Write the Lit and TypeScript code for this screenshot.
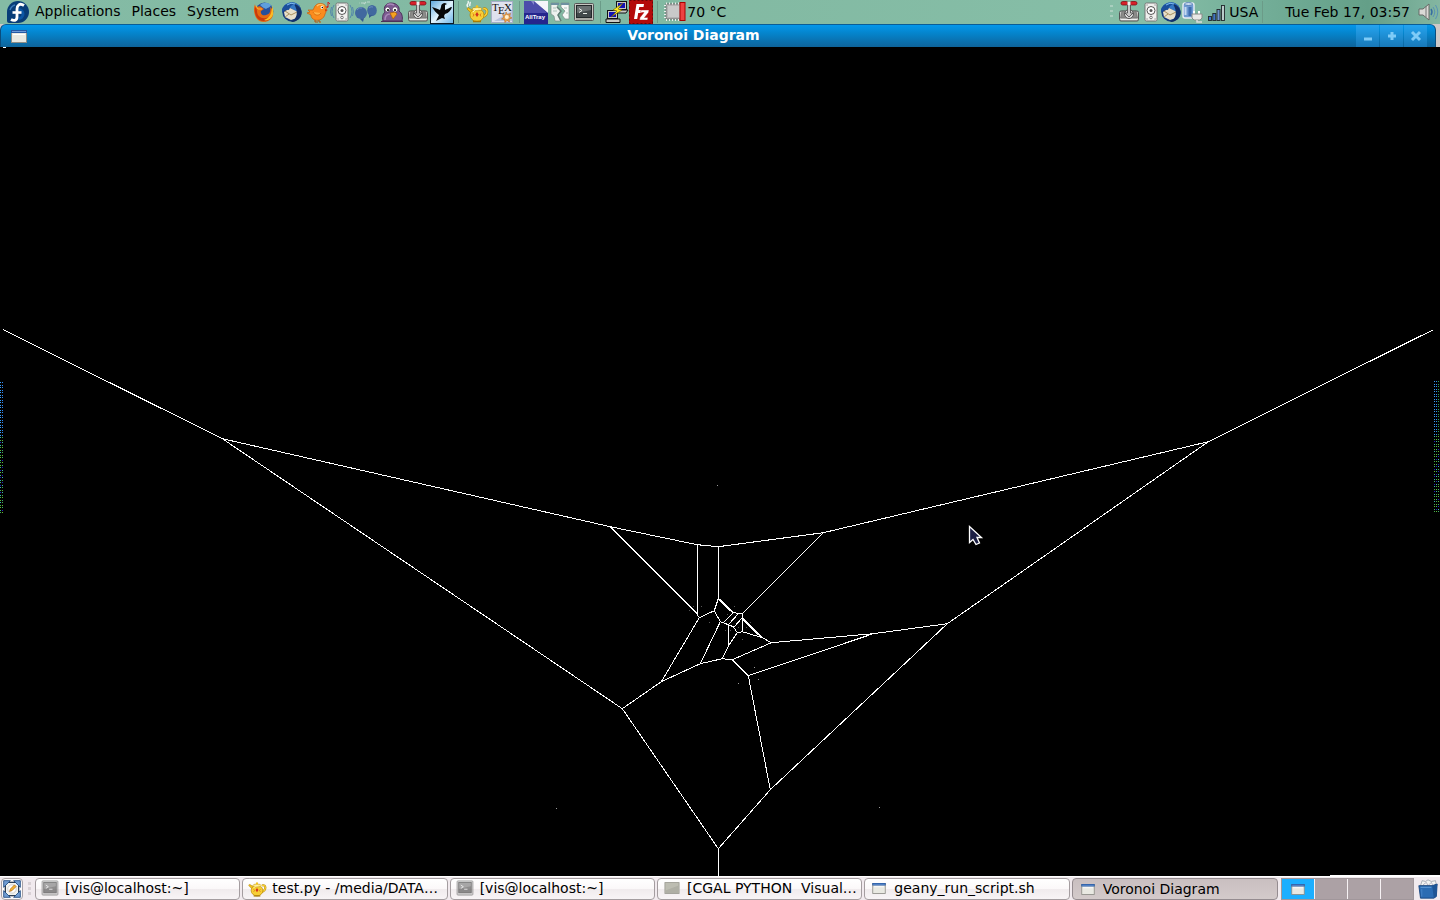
import { LitElement, html, svg, css, type SVGTemplateResult } from 'lit';
import { customElement, property } from 'lit/decorators.js';

const press = svg`
  <rect x="2.500" y="11" width="19" height="10" rx="1.500" fill="#c9c9c7" stroke="#555"/>
  <path d="M5 11h14l1.500 7h-17z" fill="#8b8b89" stroke="#666" stroke-width=".6"/>
  <circle cx="12" cy="14" r="4.500" fill="#ddd" stroke="#555"/>
  <path d="M10.500 4h3v9h2.500l-4 4-4-4h2.500z" fill="#c9c9c9" stroke="#444" stroke-width=".8"/>
  <path d="M4 19.500h16" stroke="#eee"/>
  <rect x="4" y="1.500" width="7" height="3.500" rx="1.700" fill="#d8202a" stroke="#7f1016" stroke-width=".8"/>
  <rect x="13" y="1.500" width="7" height="3.500" rx="1.700" fill="#d8202a" stroke="#7f1016" stroke-width=".8"/>
  <rect x="10.500" y="2" width="3" height="3" fill="#eee"/>`;

const speaker = svg`
  <rect x="6" y="3" width="12" height="18" rx="1.500" fill="#f0f0ee" stroke="#777"/>
  <circle cx="12" cy="10.500" r="4" fill="#fff" stroke="#555"/>
  <circle cx="12" cy="10.500" r="1.500" fill="#555"/>
  <circle cx="12" cy="17.500" r="1.300" fill="#fff" stroke="#555" stroke-width=".8"/>
  <path d="M8 5h.1M16 5h.1M8 19h.1M16 19h.1" stroke="#555" stroke-linecap="round"/>`;

const teapot = svg`
  <path d="M18 9c5-2 6 6-1 8" fill="none" stroke="#b98a08" stroke-width="2.600"/>
  <path d="M18 9c5-2 6 6-1 8" fill="none" stroke="#ffd93b" stroke-width="1.300"/>
  <path d="M6 13l-4-4 1-1.500 5 3z" fill="#f3c31a" stroke="#a97c05" stroke-width=".6"/>
  <ellipse cx="12" cy="15" rx="7" ry="6.500" fill="#f7cf35" stroke="#b68508" stroke-width=".8"/>
  <path d="M8 21.500h8" stroke="#a97c05" stroke-width="1.500"/>
  <ellipse cx="12" cy="9" rx="5" ry="1.800" fill="#ffeb84" stroke="#b68508" stroke-width=".6"/>
  <circle cx="12" cy="6.500" r="1.300" fill="#f3c31a"/>
  <path d="M12 12l1.700 2.500-1.700 2.500-1.700-2.500z" fill="#d2321c"/>
  <path d="M8 13.500l1 1.500-1 1.500M16 13.500l-1 1.500 1 1.500" stroke="#e0761a" fill="none"/>
  <path d="M8 12q1.500-3 5-3" stroke="#fff6c2" fill="none"/>
  <path d="M3 7c-3-3 2-3 0-6M5 6c-1-2 1-3 0-4" stroke="#fff" stroke-width="1.500" fill="none" opacity=".85"/>`;

const thunder = svg`
  <circle cx="12" cy="12" r="9.700" fill="#15397c"/>
  <path d="M4 6C8 1 17 1 20 7c2 4 2 9-2 13 1-6-3-12-14-14z" fill="#3478c4"/>
  <path d="M4 12l6-4 8 4-1 6-6 2-6-3z" fill="#e8dfca"/>
  <path d="M5 11l6 4 6-3M5 17l4-3" stroke="#a8905f" fill="none"/>
  <path d="M2 9c2-5 8-7 13-5-4 1-5 3-6 6-3-1-5 0-7 3z" fill="#1b4f9c"/>
  <path d="M14 4c6 1 9 7 7 12-2 4-6 6-10 6 6-3 8-10 3-18z" fill="#122f68"/>
  <path d="M7 5q4-3 8-1" stroke="#7db9ee" fill="none"/>`;

const terminal = svg`
  <rect x="2.500" y="3.500" width="19" height="17" rx="1" fill="#c6c6c0" stroke="#555"/>
  <rect x="4.500" y="5.500" width="15" height="12" fill="#42484a" stroke="#23282a"/>
  <path d="M5 6h14v4L5 13z" fill="#6a7071"/>
  <path d="M7 8.500l3 2-3 2M11 13.500h4" stroke="#e9eee9" fill="none"/>
  <path d="M4 19h16" stroke="#8c8c88"/>`;

const windowIcon = svg`
  <rect x="4.500" y="6.500" width="15" height="12" fill="#e9e9e2" stroke="#8d8d86"/>
  <rect x="4" y="6" width="16" height="3" fill="#2559a5"/>
  <path d="M5 7.500h14" stroke="#6f9bd6"/>
  <path d="M6 10.500h12" stroke="#fff"/>`;

const icons: Record<string, SVGTemplateResult> = {
  fedora: svg`
    <path d="M12 1a11 11 0 1 1 0 22H3a2 2 0 0 1-2-2v-9A11 11 0 0 1 12 1z" fill="#073d78"/>
    <path d="M12.500 9.500a4.500 4.500 0 0 1 0 9" fill="none" stroke="#0b57a4" stroke-width="3"/>
    <path d="M18 5.500c-4.500-3-7 0-7 3.500v8c0 4-3.500 4-6 2.500" fill="none" stroke="#fff" stroke-width="2.800"/>
    <path d="M6.500 12.500h9" stroke="#fff" stroke-width="2.600"/>
    <path d="M4 10c1-3 3-4.500 5-5" stroke="#3a78b8" fill="none" stroke-width="1.500"/>`,
  firefox: svg`
    <circle cx="12.500" cy="11.500" r="9" fill="#264f9b"/>
    <path d="M8 5c3-3 8-3 11 0-1 3-3 2-5 4-2-1-4-2-6-4z" fill="#5f9fdc"/>
    <path d="M3 4c0 2 1 2 2 3 2-1 3-1 4 0l3 2-3 2c-1 3 2 5 5 4 4-1 5-4 4-8 4 3 4 9 1 12-4 4-11 4-14 0C2 15 1 9 3 4z" fill="#e66a12"/>
    <path d="M3 7c1 1 2 2 2 4 0 5 4 8 9 7 4 0 6-3 7-6 0 5-4 10-9 9-8 0-10-8-9-14z" fill="#c93b0c"/>
    <path d="M20 6c2 4 2 9-1 12-2 2-5 3-7 2 6-2 8-7 8-14z" fill="#fbbd25"/>
    <path d="M4 6l2 3 4 0" stroke="#ffb431" fill="none"/>`,
  thunder,
  bird: svg`
    <path d="M9 6c3-4 10-3 11 1 1 3 0 5-1 7-1 5-6 7-10 6-3-1-4-3-4-5L1 13l3-1-2-2 5 0c1-1 1-3 2-4z" fill="#fb8c1e" stroke="#c95d08" stroke-width=".7"/>
    <path d="M7 12c2 4 6 4 8 1" fill="#ffb347" stroke="#d56b0a" stroke-width=".8"/>
    <path d="M11 6c2-2 5-2 7 0" stroke="#ffc368" stroke-width="1.500" fill="none"/>
    <circle cx="16" cy="7.500" r="1.400" fill="#fff"/><circle cx="16.300" cy="7.500" r=".7"/>
    <path d="M19 9l3 1-3 1.500z" fill="#d33d13"/><path d="M9 20v2h3M13 20v2h2" stroke="#b95407" fill="none"/>
    <path d="M22 7V2l2 2" stroke="#c22" fill="none"/><circle cx="21.300" cy="7" r="1" fill="#c22"/>`,
  sound: svg`${speaker}
    <path d="M4 5q-4 7 0 13M1.500 7q-2 5 0 9M20 5q4 7 0 13M22.500 7q2 5 0 9" stroke="#5487ab" fill="none"/>`,
  balls: svg`
    <ellipse cx="7" cy="13" rx="6" ry="6" fill="#41689f"/><path d="M6 19l3 3 1-4z" fill="#365a90"/>
    <ellipse cx="18" cy="10.500" rx="4.800" ry="5.500" fill="#41689f"/><path d="M15 15v3l4-3z" fill="#365a90"/>
    <path d="M3 10q2-3 5-2M15 8q2-2 4-1" stroke="#6a8dbe" fill="none"/>
    <path d="M7 3h3M13 2h3M10 4l2-2M5 3h.5" stroke="#d5e5df" stroke-width="1.200" opacity=".7"/>`,
  pidgin: svg`
    <path d="M3 21c-1-5 0-7 2-9-2-5 1-9 6-9 6 0 9 4 8 8 3 2 4 6 3 10z" fill="#7d5a91" stroke="#4b3159"/>
    <path d="M5 20c0-4 2-6 5-6M7 5q3-2 7 0" stroke="#a98abb" fill="none" stroke-width="1.500"/>
    <circle cx="7.500" cy="9.500" r="2.500" fill="#fff" stroke="#4b3159" stroke-width=".7"/>
    <circle cx="15" cy="9.500" r="2.700" fill="#fff" stroke="#4b3159" stroke-width=".7"/>
    <circle cx="8" cy="10" r="1.100"/><circle cx="15" cy="10" r="1.100"/>
    <path d="M10 13l5-1 2 2-4 5z" fill="#f6a122" stroke="#af5e06" stroke-width=".7"/>
    <path d="M1 21.500h22" stroke="#4b3159"/>`,
  press,
  swallow: svg`
    <defs><linearGradient id="sky" x2="1" y2="1"><stop stop-color="#5aa5dd"/><stop offset=".5" stop-color="#e2f3fc"/><stop offset="1" stop-color="#6cb5e8"/></linearGradient></defs>
    <rect x=".5" y=".5" width="23" height="23" fill="url(#sky)" stroke="#0c1a24"/>
    <path d="M2 7c3 1 6 2 8 3l1-3c0-3 2-4 4-4l2 1-2 1 0 5c3-1 5-3 7-3-1 3-3 6-7 7l-1 2 1 3-3-1-6 3 3-6c-3-2-5-5-7-8z" fill="#080808"/>`,
  teapot,
  tex: svg`
    <rect x=".5" y="1.500" width="21" height="21" fill="#dfe2ee" stroke="#a5aec7"/>
    <path d="M3 21h18V11z" fill="#b9c3df"/>
    <text x="1" y="11" font-family="Liberation Serif, serif" font-size="11" fill="#111">T</text>
    <text x="7" y="14" font-family="Liberation Serif, serif" font-size="11" fill="#111">E</text>
    <text x="13" y="11" font-family="Liberation Serif, serif" font-size="11" fill="#111">X</text>
    <path d="M15 12l1.500 2.500 3-1-1 3 2.500 1.500-3 1 .500 3-2.500-1.500-2 2-.5-3-3-.5 2.500-2-1.500-2.500 3 .5z" fill="#e9a04c" stroke="#b86d24" stroke-width=".6"/>
    <circle cx="15.800" cy="17" r="2" fill="#fff0d0"/>`,
  alltray: svg`
    <rect width="24" height="23" y="1" fill="#25258d"/>
    <path d="M0 1h11l12 12H0z" fill="#4c4cab"/><path d="M10 1h14v12z" fill="#f5f5fb"/><path d="M10 1v4l-3-4z" fill="#8888cb"/>
    <text x="1" y="19" font-family="Liberation Sans, sans-serif" font-size="6" font-weight="bold" fill="#fff">AllTray</text>`,
  crack: svg`
    <path d="M3 3h8l-2 4 4 4-3 4 3 6H7l-1-5-3-2z" fill="#edf1ee" stroke="#7b8c86" stroke-width=".7"/>
    <path d="M13 3h8v16h-4l-3-4 3-4-4-4z" fill="#f6f8f7" stroke="#7b8c86" stroke-width=".7"/>
    <path d="M3 4h8M13 4h8" stroke="#6e91a0" stroke-width="2"/>
    <path d="M9 7l4 4-3 4 3 6" stroke="#5f7d74" stroke-width="1.500" fill="none"/>
    <path d="M5 8h3M5 11h4M16 8h3M18 13h2" stroke="#afc2bb"/>`,
  terminal,
  putty: svg`
    <rect x="11.500" y="1.500" width="10" height="8" fill="#c9c9c3" stroke="#111"/><rect x="13" y="3" width="7" height="5" fill="#1212b5"/>
    <path d="M10 10h13l-2 3H10z" fill="#c9c9c3" stroke="#111"/>
    <rect x="2.500" y="10.500" width="10" height="8" fill="#c9c9c3" stroke="#111"/><rect x="4" y="12" width="7" height="5" fill="#1212b5"/>
    <path d="M1 19h14v3.500H1z" fill="#c9c9c3" stroke="#111"/>
    <path d="M18 3l-10 7 4 1-6 6 11-7-4-1z" fill="#ffec20" stroke="#695a00" stroke-width=".6"/>`,
  filezilla: svg`
    <rect y="0" width="24" height="24" fill="#b40a0a"/>
    <rect x=".5" y=".5" width="23" height="23" fill="none" stroke="#6b0606" stroke-dasharray="2 2"/>
    <path d="M5 19L7.500 4H15l-.5 3h-4.200l-.6 3H13l-.5 3H9.200l-1 6z" fill="#fff"/>
    <path d="M12 10h8l-.5 2.500-4 5h3.500l-.5 2.500h-8l.5-2.500 4-5h-3.500z" fill="#fff" stroke="#b40a0a" stroke-width=".4"/>`,
  chip: svg`
    <rect x="3" y="4" width="15" height="15" fill="#b4b4b4" stroke="#737373"/>
    <rect x="5" y="6" width="11" height="11" fill="#c9c9c9"/>
    <path d="M3 3.500h15M3 20h15" stroke="#eee" stroke-dasharray="1 2" stroke-width="2"/>
    <path d="M2 5v14" stroke="#eee" stroke-dasharray="1 2" stroke-width="2"/>
    <rect x="17" y="2.500" width="5" height="18" fill="#ed4242" stroke="#a00"/>`,
  speaker,
  battery: svg`
    <rect x="2" y="3" width="11" height="15" rx="2" fill="#6f9ad2" stroke="#e9eef5" stroke-width="1.400"/>
    <ellipse cx="7.500" cy="4" rx="4" ry="1.500" fill="#c9daef" stroke="#3a69a8" stroke-width=".7"/>
    <path d="M4.500 7v8" stroke="#c6daf2" stroke-width="2"/><path d="M9 7v9" stroke="#3d6cae" stroke-width="3"/>
    <path d="M13 14v-3M18 14v-3" stroke="#fff" stroke-width="2"/>
    <path d="M11 14h10v4l-2 2h-6l-2-2z" fill="#e9e9e7" stroke="#8a8a88"/><path d="M16 20v2h5" stroke="#ddd" fill="none" stroke-width="1.500"/>`,
  signal: svg`
    <g stroke="#20262b" stroke-width=".9"><rect x="3.500" y="16.500" width="3" height="4" fill="#3f74c4"/><rect x="7.800" y="13.500" width="3" height="7" fill="#3f74c4"/><rect x="12" y="9.500" width="3" height="11" fill="#6c93cf"/><rect x="16.500" y="5.500" width="3" height="15" fill="#b8cbc9"/></g>`,
  volume: svg`
    <path d="M3 9h4l6-5v16l-6-5H3z" fill="#dadad6" stroke="#666a66"/><path d="M10 6v11" stroke="#777"/>
    <path d="M15 9q2 3 0 6" stroke="#356ca2" fill="none" stroke-width="1.400"/>
    <path d="M17 7q3.500 5 0 10M19.500 5q4.500 7 0 14" stroke="#5992b5" fill="none"/>`,
  window: windowIcon,
  blank: svg`<rect x="3.500" y="5.500" width="17" height="13" fill="#bdbdb2" stroke="#9a9a91"/><path d="M4 15l16-6v9H4z" fill="#afafa5"/>`,
  desktop: svg`
    <rect x="4" y="4" width="16" height="16" fill="#f3f3ef" stroke="#26374c" stroke-width="1.500"/>
    <g fill="#6f9bd1" stroke="#1e4a82"><path d="M2 2h8L2 10z"/><path d="M22 2v8l-8-8z"/><path d="M2 22v-8l8 8z"/><path d="M22 22h-8l8-8z"/></g>
    <circle cx="12" cy="12" r="5" fill="#fff" stroke="#aaa" stroke-width=".6"/>
    <path d="M9 15l1-3 5-5 2 2-5 5z" fill="#f2b233" stroke="#a55b10" stroke-width=".7"/>`,
  trash: svg`
    <path d="M3 8l2-6 4 1 3-2 4 2 5-1 1 6z" fill="#f4f4f2" stroke="#8b96a0" stroke-width=".8"/>
    <path d="M6 7l4-3 2 4 4-4 2 4" stroke="#aab" fill="none"/>
    <path d="M1 8h16l6-2-1 15-3 2H3z" fill="#2b6cb3" stroke="#123f78"/>
    <path d="M17 8l6-2-1 15-3 2z" fill="#1d5596"/><path d="M3 10h13" stroke="#6ba3dd"/><path d="M4.500 12v9" stroke="#4a89cc"/>`,
};

@customElement('panel-icon')
class PanelIcon extends LitElement {
  @property() name = '';
  @property({ type: Boolean }) faded = false;
  static styles = css`
    :host { display: block; flex: none; width: 24px; height: 24px; }
    svg { display: block; width: 100%; height: 100%; overflow: visible; }
    :host([faded]) { filter: grayscale(1); opacity: 0.6; }
  `;
  render() {
    return html`<svg viewBox="0 0 24 24" aria-hidden="true">${icons[this.name]}</svg>`;
  }
}

const edges = [
  '3,330 222,439 610,527 697,545 718,547 823,533 1208,442 1433,330',
  '222,439 622,709 718,849 718,876',
  '718,849 770,790 947,624 1208,442',
  '622,709 661,682 700,664 722,659 732,660 748,676 770,790',
  '748,676 873,634 947,624',
  '732,660 771,643 873,634',
  '771,643 762,638 742,632 737,633 729,645 722,659',
  '697,545 697,615 699,618 661,682',
  '610,527 698,615',
  '699,618 714,611 718,599 718,547',
  '714,611 720,622 700,664',
  '720,622 728,625 733,627 737,633',
  '728,625 728,646',
  '718,599 733,613 742,614 823,533',
  '742,614 742,632',
  '733,613 723,623',
  '738,614 729,624',
  '742,618 734,627',
];
const heavyEdges = ['719,600 733,613', '742,619 762,638'];
const sites = [
  [717, 485], [556, 808], [879, 807], [754, 667], [758, 679], [738, 683],
  [693, 606], [701, 606], [689, 610], [709, 622], [734, 606], [727, 614],
  [725, 630], [730, 630], [738, 627], [746, 627], [750, 622], [742, 639],
];

const noiseColor = (i: number, c: number) => {
  const blue = ['#3a9cf4', '#2a12d8', '#2b9d50', '#2f8af6'];
  const green = ['#3fb070', '#38b0b0', '#62bc30', '#2a20c8', '#45b050'];
  const k = i * 7 + c * 3 + (i % 4);
  return i < 22 ? blue[k % 4] : green[k % 5];
};
const leftNoise = Array.from({ length: 53 }, (_, i) => [0, 2].map((x, c) =>
  svg`<rect x=${x} y=${382 + Math.floor(i / 2) * 5 + (i % 2) * 3} width="1" height="1" fill=${noiseColor(i, c)}/>`));
const rightNoise = Array.from({ length: 53 }, (_, i) => [1434, 1436, 1438].map((x, c) =>
  svg`<rect x=${x} y=${381 + Math.floor(i / 2) * 5 + (i % 2) * 3} width="1" height="1" fill=${noiseColor(i, c)}/>`));

const launchers: [string, string, string][][] = [
  [['firefox', 'Firefox', 'wide'], ['thunder', 'Thunderbird', 'wide'], ['bird', 'Music', ''], ['sound', 'Sound', ''],
   ['balls', 'Chat', ''], ['pidgin', 'Pidgin', 'wide'], ['press', 'Press', ''], ['swallow', 'Swallow', '']],
  [['teapot', 'Geany', 'wide'], ['tex', 'TeX', '']],
  [['alltray', 'AllTray', ''], ['crack', 'Break', ''], ['terminal', 'Terminal', '']],
  [['putty', 'PuTTY', ''], ['filezilla', 'FileZilla', '']],
];

const trayItems: [string, string, string][] = [
  ['press', 'Press', 'wide'], ['speaker', 'Player', ''], ['thunder', 'Mail', ''],
  ['battery', 'Battery', 'wide'], ['signal', 'Network', 'wide'],
];

const tasks = [
  { icon: 'terminal', label: '[vis@localhost:~]', faded: true },
  { icon: 'teapot', label: 'test.py - /media/DATA…' },
  { icon: 'terminal', label: '[vis@localhost:~]', faded: true },
  { icon: 'blank', label: '[CGAL PYTHON  Visual…' },
  { icon: 'window', label: 'geany_run_script.sh' },
  { icon: 'window', label: 'Voronoi Diagram', active: true },
];

@customElement('app-root')
class AppRoot extends LitElement {
  static styles = css`
    :host {
      display: flex; flex-direction: column; height: 100vh; overflow: hidden;
      background: #000; color: #000;
      font: 14px/20px "DejaVu Sans", sans-serif;
    }
    button { font: inherit; color: inherit; border: 0; padding: 0; margin: 0; background: none; }
    .top {
      display: flex; align-items: center; justify-content: space-between; height: 24px; flex: none;
      background: linear-gradient(90deg, #84bba5 0%, #82b9a2 45%, #86bea7 80%, #72ad97 88%, #649f88 95%, #84b6a1 100%);
    }
    .group { display: flex; align-items: center; height: 24px; }
    .menus { padding-left: 6px; gap: 5px; }
    .menus .group { gap: 11px; }
    .menu { white-space: nowrap; height: 24px; padding-bottom: 2px; }
    .launchers { padding-left: 11px; }
    .launch { display: flex; justify-content: center; width: 24px; height: 24px; }
    .launch.wide { width: 28px; }
    .sep { width: 1px; height: 22px; margin: 0 4px; background: #6b9b88; }
    .temp { display: flex; align-items: center; padding-left: 1px; }
    .tray .launch { width: 20px; }
    .tray .launch.wide { width: 24px; }
    .label { padding-bottom: 1px; }
    .clock { padding: 0 6px 1px 18px; white-space: nowrap; }
    .grip { width: 3px; height: 14px; margin-right: 4px; background: repeating-linear-gradient(#a9cfbf 0 2px, transparent 2px 5px); }
    .frame { flex: none; height: 23px; padding-right: 4px; background: #cfc9c7; }
    .title {
      display: flex; align-items: center; height: 23px; box-sizing: border-box; padding: 0 8px 0 6px;
      border-top: 1px solid #0a5d96; border-left: 1px solid #0a4d7d; border-right: 1px solid #0a4d7d;
      border-radius: 6px 6px 0 0; background: linear-gradient(#0397ea, #0583ca 40%, #0e639a);
    }
    .title h1 { flex: 1; margin: 0; padding-bottom: 2px; text-align: center; font-size: 14px; line-height: 20px; font-weight: bold; color: #fff; }
    .controls { display: flex; gap: 1px; }
    .control { width: 23px; height: 22px; background: linear-gradient(#24a4f0, #1878b7); }
    .control svg { display: block; margin: 0 auto; }
    .canvas { flex: 1; min-height: 0; width: 100%; display: block; background: #000; }
    .edge { fill: none; stroke: #fff; stroke-width: 1; shape-rendering: crispEdges; }
    .heavy { stroke-width: 2; }
    .noise { shape-rendering: crispEdges; }
    .bottom {
      display: flex; align-items: center; gap: 2px; height: 24px; flex: none; box-sizing: border-box;
      padding: 1px 1px 0; background: #f1eaee; border-top: 1px solid #fff;
    }
    .show { width: 22px; height: 22px; box-sizing: border-box; border: 1px solid #a9a2a5; border-radius: 4px; background: #fbf9fa; display: grid; place-items: center; }
    .show panel-icon, .trash panel-icon, .task panel-icon { width: 20px; height: 20px; }
    .bottom .grip { margin: 0 2px 0 3px; background: repeating-linear-gradient(#d9d1d5 0 3px, transparent 3px 5px); }
    .tasks { flex: 1; min-width: 0; display: flex; gap: 2px; }
    .task {
      flex: 1 1 0; min-width: 0; display: flex; align-items: center; gap: 5px; height: 22px; box-sizing: border-box;
      padding: 0 2px 2px 4px; border: 1px solid #a49da0; border-radius: 4px; text-align: left;
      background: linear-gradient(#fff, #fbf8f9 50%, #f0ebed 50%, #f8f4f6);
    }
    .task span { overflow: hidden; text-overflow: ellipsis; white-space: pre; }
    .task.active { background: linear-gradient(#c9bfc0, #d3caca); border-color: #958c90; padding: 0 2px 0 5px; }
    .spaces { display: grid; grid-template-columns: repeat(4, 32px); gap: 1px; padding: 1px; height: 20px; margin-left: 1px; background: #f7f2f4; outline: 1px solid #a1979b; outline-offset: -1px; }
    .space { display: grid; place-items: center; background: #aca1a5; }
    .space.current { background: #1cafff; }
    .space panel-icon { height: 20px; }
    .trash { display: grid; place-items: center; width: 23px; }
  `;

  launcher([icon, label, size]: [string, string, string]) {
    return html`<button class="launch ${size}" aria-label=${label}><panel-icon name=${icon}></panel-icon></button>`;
  }

  render() {
    return html`
      <header class="top">
        <div class="group">
          <nav class="group menus">
            <panel-icon name="fedora"></panel-icon>
            <div class="group">
              <button class="menu">Applications</button><button class="menu">Places</button><button class="menu">System</button>
            </div>
          </nav>
          <div class="group launchers">
            ${launchers.map(g => html`${g.map(l => this.launcher(l))}<span class="sep"></span>`)}
            <div class="temp"><panel-icon name="chip"></panel-icon><span class="label">70 °C</span></div>
          </div>
        </div>
        <div class="group tray">
          <span class="grip"></span>
          ${trayItems.map(l => this.launcher(l))}
          <button class="label">USA</button>
          <span class="sep"></span>
          <button class="clock">Tue Feb 17, 03:57</button>
          ${this.launcher(['volume', 'Volume', 'wide'])}
        </div>
      </header>
      <div class="frame">
        <div class="title">
          <panel-icon name="window"></panel-icon>
          <h1>Voronoi Diagram</h1>
          <div class="controls">
            <button class="control" aria-label="Minimize"><svg width="12" height="12" viewBox="0 0 12 12"><path d="M2 9h8" stroke="#7fcbf7" stroke-width="3"/></svg></button>
            <button class="control" aria-label="Maximize"><svg width="12" height="12" viewBox="0 0 12 12"><path d="M2 6h8M6 2v8" stroke="#7fcbf7" stroke-width="3"/></svg></button>
            <button class="control" aria-label="Close"><svg width="12" height="12" viewBox="0 0 12 12"><path d="M2 2l8 8M10 2l-8 8" stroke="#7fcbf7" stroke-width="3"/></svg></button>
          </div>
        </div>
      </div>
      <svg class="canvas" viewBox="0 47 1440 829" preserveAspectRatio="none" role="img" aria-label="Voronoi diagram">
        <g transform="translate(0.3 -0.3)">
          ${edges.map(p => svg`<polyline class="edge" points=${p}/>`)}
          ${heavyEdges.map(p => svg`<polyline class="edge heavy" points=${p}/>`)}
        </g>
        <g class="noise">
          ${sites.map(([x, y], i) => svg`<rect x=${x} y=${y} width="1" height="1" fill=${i < 6 ? '#999' : '#555'}/>`)}
          ${leftNoise}${rightNoise}
          <rect x="1330" y="875" width="110" height="1" fill="#fff"/>
          <rect x="3" y="47" width="3" height="1" fill="#fff"/>
        </g>
        <path d="M969.500 526.500v16l3.500-3 3 5 3.500-1.500-2.500-5.500h4.500z" fill="#1c1f45" stroke="#fff" stroke-width="1.300"/>
      </svg>
      <footer class="bottom">
        <button class="show" aria-label="Show desktop"><panel-icon name="desktop"></panel-icon></button>
        <span class="grip"></span>
        <nav class="tasks">
          ${tasks.map(t => html`<button class="task ${t.active ? 'active' : ''}">
            <panel-icon name=${t.icon} ?faded=${!!t.faded}></panel-icon><span>${t.label}</span></button>`)}
        </nav>
        <div class="spaces">
          <div class="space current"><panel-icon name="window"></panel-icon></div>
          <div class="space"></div><div class="space"></div><div class="space"></div>
        </div>
        <button class="trash" aria-label="Trash"><panel-icon name="trash"></panel-icon></button>
      </footer>`;
  }
}
